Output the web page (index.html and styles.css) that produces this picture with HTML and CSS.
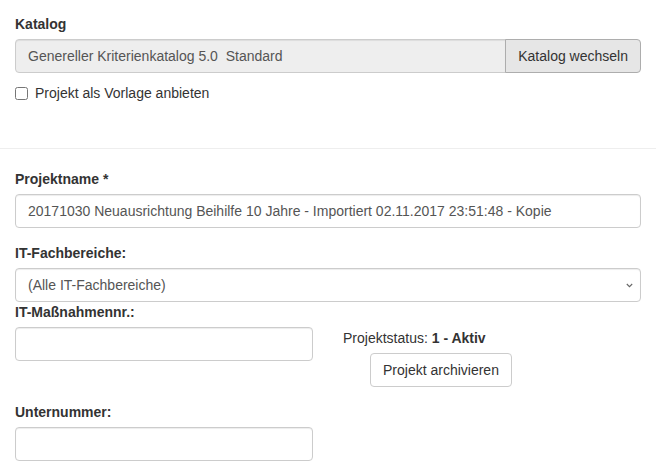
FILE: index.html
```html
<!DOCTYPE html>
<html lang="de">
<head>
<meta charset="utf-8">
<title>Projekt</title>
<link rel="stylesheet" href="styles.css">
</head>
<body>
<div class="page">
  <section class="block top">
    <div class="form-group flush">
      <label class="lbl">Katalog</label>
      <div class="input-group">
        <input class="form-control ro" type="text" readonly value="Genereller Kriterienkatalog 5.0  Standard">
        <button class="btn btn-pressed" type="button">Katalog wechseln</button>
      </div>
    </div>
    <div class="checkbox">
      <label class="check-label"><input class="check" type="checkbox"><span>Projekt als Vorlage anbieten</span></label>
    </div>
  </section>
  <hr class="sep">
  <section class="block">
    <div class="form-group">
      <label class="lbl">Projektname *</label>
      <input class="form-control" type="text" value="20171030 Neuausrichtung Beihilfe 10 Jahre - Importiert 02.11.2017 23:51:48 - Kopie">
    </div>
    <div class="form-group flush">
      <label class="lbl">IT-Fachbereiche:</label>
      <div class="select-wrap">
        <select class="form-control select">
          <option>(Alle IT-Fachbereiche)</option>
        </select>
        <svg class="chev" width="7" height="5" viewBox="0 0 7 5"><path d="M0.8 1 L3.5 3.7 L6.2 1" fill="none" stroke="#666" stroke-width="1.1"/></svg>
      </div>
    </div>
    <label class="lbl">IT-Maßnahmennr.:</label>
    <div class="row">
      <div class="col">
        <input class="form-control" type="text">
      </div>
      <div class="col status-col">
        <div class="status">Projektstatus: <strong>1 - Aktiv</strong></div>
        <button class="btn btn-default archive" type="button">Projekt archivieren</button>
      </div>
    </div>
    <div class="row">
      <div class="col form-group">
        <label class="lbl">Unternummer:</label>
        <input class="form-control" type="text">
      </div>
      <div class="col"></div>
    </div>
  </section>
</div>
</body>
</html>
```

FILE: styles.css
```css
* { box-sizing: border-box; }
html, body { margin: 0; padding: 0; background: #fff; }
body {
  font-family: "Liberation Sans", Arial, Helvetica, sans-serif;
  font-size: 14px;
  line-height: 20px;
  color: #333;
}
.page { width: 656px; }
.block { padding: 0 15px; }
.top { padding-top: 14px; }
.form-group { margin-bottom: 15px; }
.form-group.flush { margin-bottom: 0; }
.lbl {
  display: block;
  font-weight: bold;
  margin-bottom: 5px;
  line-height: 20px;
}
.form-control {
  display: block;
  width: 100%;
  height: 34px;
  padding: 6px 12px;
  font-family: inherit;
  font-size: 14px;
  line-height: 20px;
  color: #555;
  background: #fff;
  border: 1px solid #ccc;
  border-radius: 4px;
  box-shadow: inset 0 1px 1px rgba(0,0,0,0.075);
  margin: 0;
  outline: none;
}
.input-group { display: flex; }
.input-group .ro {
  flex: 1;
  background: #eee;
  border-radius: 4px 0 0 4px;
}
.btn {
  display: inline-block;
  height: 34px;
  padding: 6px 12px;
  font-family: inherit;
  font-size: 14px;
  line-height: 20px;
  color: #333;
  border: 1px solid #ccc;
  border-radius: 4px;
  background: #fff;
  white-space: nowrap;
  cursor: pointer;
}
.btn-pressed {
  background: #e6e6e6;
  border-color: #adadad;
  border-radius: 0 4px 4px 0;
  margin-left: -1px;
  flex: none;
}
.checkbox { margin: 10px 0; min-height: 20px; }
.check-label { display: flex; align-items: flex-start; cursor: pointer; }
.check { width: 13px; height: 13px; margin: 4px 7px 0 0; flex: none; }
.sep {
  border: 0;
  border-top: 1px solid #eee;
  margin: 45px 0 20px 0;
  height: 0;
}
.select-wrap { position: relative; }
.select { appearance: none; -webkit-appearance: none; padding-right: 24px; }
.chev { position: absolute; right: 8px; top: 15px; }
.row {
  display: grid;
  grid-template-columns: 1fr 1fr;
  column-gap: 30px;
}
.status-col { padding-top: 1px; margin-bottom: 15px; }
.status { line-height: 20px; }
.archive { margin-top: 5px; margin-left: 27px; }
```
